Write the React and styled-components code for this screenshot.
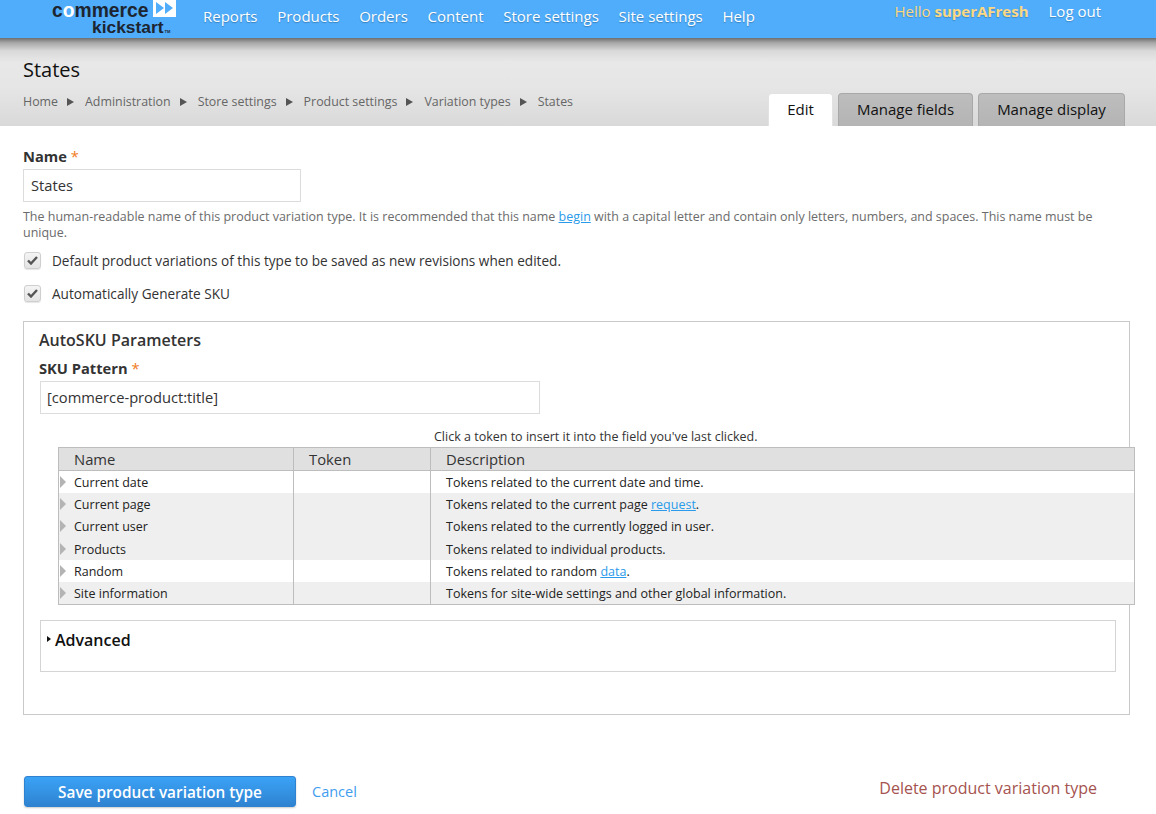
import React from 'react';
import styled, { createGlobalStyle } from 'styled-components';

const GlobalStyle = createGlobalStyle`
  html, body {
    margin: 0;
    padding: 0;
    background: #fff;
    overflow: hidden;
  }
  body {
    font-family: "Open Sans", "Noto Sans", sans-serif;
    color: #333;
  }
  * { box-sizing: border-box; }
`;

const Page = styled.div`
  width: 1156px;
  height: 814px;
  overflow: hidden;
`;

const TopBar = styled.header`
  height: 38px;
  background: #4fadfb;
  display: flex;
  padding-left: 52px;
`;

const Logo = styled.div`
  width: 124px;
  height: 38px;
  display: flex;
  flex-direction: column;
  font-family: "Liberation Sans", sans-serif;
  font-weight: 700;
  color: #1d2530;
  flex-shrink: 0;
`;

const LogoTop = styled.div`
  display: flex;
  height: 19px;
  padding-top: 2px;
  font-size: 19.3px;
  line-height: 17px;
`;

const LogoO = styled.span`
  color: #fff;
`;

const LogoMark = styled.svg`
  width: 23px;
  height: 17px;
  margin: -2px 0 0 5px;
  flex-shrink: 0;
`;

const LogoBottom = styled.div`
  font-size: 17.4px;
  line-height: 17px;
  padding-left: 40px;
  white-space: nowrap;
`;

const LogoTm = styled.sup`
  font-size: 4px;
  line-height: 0;
  vertical-align: baseline;
  margin-left: 1px;
`;

const Nav = styled.nav`
  display: flex;
  gap: 19.7px;
  padding: 6px 0 0 27px;
`;

const NavLink = styled.a`
  color: #fff;
  font-size: 15px;
  line-height: 20px;
  text-shadow: 0 1px 1px rgba(0, 0, 0, 0.25);
  white-space: nowrap;
`;

const UserBox = styled.div`
  margin-left: auto;
  display: flex;
  gap: 20px;
  padding: 1px 55px 0 0;
  font-size: 15px;
  line-height: 20px;
  text-shadow: 0 1px 1px rgba(0, 0, 0, 0.2);
`;

const Hello = styled.span`
  color: #fbd884;
  b { font-weight: 700; }
`;

const LogOut = styled.a`
  color: #fff;
`;

const TitleBand = styled.section`
  height: 88px;
  background: linear-gradient(#6f6f6f 0, #a9a9a9 5px, #d9d9d9 13px, #e8e8e8 24px, #e6e6e6 48px, #d9d9d9 88px);
  display: flex;
  justify-content: space-between;
  align-items: flex-end;
  padding: 0 31px 0 23px;
`;

const TitleBlock = styled.div`
  align-self: flex-start;
  padding-top: 18px;
`;

const Title = styled.h1`
  margin: 0;
  font-size: 20px;
  line-height: 27px;
  font-weight: 400;
  color: #111;
`;

const Crumbs = styled.div`
  display: flex;
  align-items: center;
  margin-top: 10px;
  font-size: 12.4px;
  line-height: 18px;
  color: #666;
`;

const CrumbArrow = styled.span`
  width: 0;
  height: 0;
  margin: 0 11px 0 9px;
  border-left: 7px solid #555;
  border-top: 4px solid transparent;
  border-bottom: 4px solid transparent;
`;

const Tabs = styled.div`
  display: flex;
  gap: 5px;
`;

const Tab = styled.a`
  height: 33px;
  width: ${(p) => p.$w}px;
  padding-bottom: 2px;
  display: flex;
  align-items: center;
  justify-content: center;
  font-size: 15px;
  color: #111;
  border-radius: 4px 4px 0 0;
  background: ${(p) => (p.$active ? '#fff' : 'linear-gradient(#bdbdbd, #b4b4b4)')};
  border: 1px solid ${(p) => (p.$active ? '#e2e2e2' : '#a8a8a8')};
  border-bottom: 0;
`;

const Main = styled.main`
  padding: 20px 26px 0 23px;
`;

const Label = styled.label`
  display: block;
  font-size: 14.7px;
  font-weight: 700;
  line-height: 20px;
  color: #333;
`;

const Req = styled.span`
  color: #f07c1e;
  font-weight: 400;
`;

const TextInput = styled.div`
  width: ${(p) => p.$w}px;
  height: ${(p) => p.$h}px;
  border: 1px solid #dcdcdc;
  padding: 0 0 2px 7px;
  display: flex;
  align-items: center;
  font-size: 14.7px;
  color: #333;
  background: #fff;
`;

const NameInput = styled(TextInput)`
  margin-top: 3px;
`;

const Help = styled.p`
  margin: 7px 0 0;
  font-size: 12.47px;
  line-height: 16px;
  color: #6b6b6b;
`;

const InlineLink = styled.a`
  color: #2a9bea;
  text-decoration: underline;
`;

const CheckRow = styled.div`
  display: flex;
  align-items: center;
  gap: 11px;
  height: 18px;
  margin-top: ${(p) => p.$top}px;
  font-size: 13.6px;
  color: #333;
  padding-left: 1px;
`;

const CheckBox = styled.span`
  width: 17px;
  height: 17px;
  border: 1px solid #cfcfcf;
  border-radius: 3px;
  background: linear-gradient(#f4f4f4, #e4e4e4);
  box-shadow: 0 1px 1px rgba(0, 0, 0, 0.1);
  display: flex;
  align-items: center;
  justify-content: center;
`;

const Fieldset = styled.section`
  margin-top: 19px;
  width: 1107px;
  height: 394px;
  border: 1px solid #c9c9c9;
  padding: 8px 0 0 15px;
`;

const Legend = styled.h2`
  margin: 0;
  font-size: 16px;
  line-height: 21px;
  font-weight: 600;
  color: #333;
`;

const SkuLabel = styled(Label)`
  margin-top: 7px;
`;

const SkuInput = styled(TextInput)`
  margin: 3px 0 0 1px;
  padding-left: 6px;
`;

const TokenHint = styled.div`
  margin-top: 14px;
  padding-left: 395px;
  font-size: 12.5px;
  line-height: 17px;
  color: #333;
`;

const TokenTable = styled.table`
  margin: 2px 0 0 19px;
  width: 1077px;
  border-collapse: collapse;
  border: 1px solid #bdbdbd;
  table-layout: fixed;
`;

const HeadCell = styled.th`
  height: 23px;
  padding: 0 0 0 15px;
  font-size: 14.8px;
  font-weight: 400;
  text-align: left;
  color: #333;
  background: #e0e0e0;
  border: 1px solid #bdbdbd;
`;

const Row = styled.tr`
  background: ${(p) => (p.$odd ? '#fff' : '#efefef')};
`;

const Cell = styled.td`
  height: 22.4px;
  padding: 2px 0 0 15px;
  font-size: 12.5px;
  line-height: 16px;
  color: #222;
  border-left: 1px solid #bdbdbd;
  white-space: nowrap;
`;

const NameCell = styled(Cell)`
  position: relative;
`;

const Expander = styled.span`
  position: absolute;
  left: 1px;
  top: 5px;
  width: 0;
  height: 0;
  border-left: 6px solid #b4b4b4;
  border-top: 6px solid transparent;
  border-bottom: 6px solid transparent;
`;

const Advanced = styled.section`
  margin: 15px 0 0 1px;
  width: 1076px;
  height: 52px;
  border: 1px solid #d4d4d4;
  padding: 8px 0 0 6px;
  display: flex;
  align-items: flex-start;
  gap: 4px;
  font-size: 16px;
  line-height: 22px;
  font-weight: 600;
  color: #111;
`;

const AdvancedArrow = styled.span`
  width: 0;
  height: 0;
  margin-top: 7px;
  border-left: 4px solid #111;
  border-top: 3.5px solid transparent;
  border-bottom: 3.5px solid transparent;
`;

const Actions = styled.div`
  margin-top: 61px;
  display: flex;
  align-items: flex-start;
  padding-left: 1px;
`;

const SaveButton = styled.button`
  width: 272px;
  height: 31px;
  padding: 0;
  border: 1px solid #2f82cf;
  border-radius: 3px;
  background: linear-gradient(#3ba2f6, #2f83d1);
  box-shadow: 0 1px 2px rgba(0, 0, 0, 0.2);
  color: #fff;
  font-family: inherit;
  font-size: 15.35px;
  font-weight: 600;
`;

const Cancel = styled.a`
  margin: 6px 0 0 16px;
  font-size: 14.5px;
  line-height: 20px;
  color: #3f9df0;
`;

const Delete = styled.a`
  margin: 2px 0 0 auto;
  padding-right: 33px;
  font-size: 16px;
  line-height: 20px;
  color: #a5534f;
`;

const navItems = ['Reports', 'Products', 'Orders', 'Content', 'Store settings', 'Site settings', 'Help'];
const crumbs = ['Home', 'Administration', 'Store settings', 'Product settings', 'Variation types', 'States'];

const tokens = [
  { name: 'Current date', desc: 'Tokens related to the current date and time.', odd: true },
  { name: 'Current page', desc: <>Tokens related to the current page <InlineLink>request</InlineLink>.</> },
  { name: 'Current user', desc: 'Tokens related to the currently logged in user.' },
  { name: 'Products', desc: 'Tokens related to individual products.' },
  { name: 'Random', desc: <>Tokens related to random <InlineLink>data</InlineLink>.</>, odd: true },
  { name: 'Site information', desc: 'Tokens for site-wide settings and other global information.' },
];

function Check() {
  return (
    <svg width="11" height="10" viewBox="0 0 11 10">
      <path d="M1 5.5 L4 8.5 L10 2" fill="none" stroke="#555" strokeWidth="2.4" />
    </svg>
  );
}

export default function App() {
  return (
    <Page>
      <GlobalStyle />
      <TopBar>
        <Logo>
          <LogoTop>
            <span>c<LogoO>o</LogoO>mmerce</span>
            <LogoMark viewBox="0 0 23 17">
              <rect width="23" height="17" fill="#fff" />
              <path d="M3 2 L11 8 L3 14 Z M12 2 L20 8 L12 14 Z" fill="#4fadfb" />
            </LogoMark>
          </LogoTop>
          <LogoBottom>kickstart<LogoTm>TM</LogoTm></LogoBottom>
        </Logo>
        <Nav>
          {navItems.map((item) => <NavLink key={item}>{item}</NavLink>)}
        </Nav>
        <UserBox>
          <Hello>Hello <b>superAFresh</b></Hello>
          <LogOut>Log out</LogOut>
        </UserBox>
      </TopBar>

      <TitleBand>
        <TitleBlock>
          <Title>States</Title>
          <Crumbs>
            {crumbs.map((c, i) => (
              <React.Fragment key={c}>
                <span>{c}</span>
                {i < crumbs.length - 1 && <CrumbArrow />}
              </React.Fragment>
            ))}
          </Crumbs>
        </TitleBlock>
        <Tabs>
          <Tab $active $w={65}>Edit</Tab>
          <Tab $w={135}>Manage fields</Tab>
          <Tab $w={147}>Manage display</Tab>
        </Tabs>
      </TitleBand>

      <Main>
        <Label>Name <Req>*</Req></Label>
        <NameInput $w={278} $h={33}>States</NameInput>
        <Help>
          The human-readable name of this product variation type. It is recommended that this name <InlineLink>begin</InlineLink> with a capital letter and contain only letters, numbers, and spaces. This name must be unique.
        </Help>
        <CheckRow $top={10}><CheckBox><Check /></CheckBox>Default product variations of this type to be saved as new revisions when edited.</CheckRow>
        <CheckRow $top={15}><CheckBox><Check /></CheckBox>Automatically Generate SKU</CheckRow>

        <Fieldset>
          <Legend>AutoSKU Parameters</Legend>
          <SkuLabel>SKU Pattern <Req>*</Req></SkuLabel>
          <SkuInput $w={500} $h={33}>[commerce-product:title]</SkuInput>
          <TokenHint>Click a token to insert it into the field you've last clicked.</TokenHint>
          <TokenTable>
            <colgroup>
              <col style={{ width: 235 }} />
              <col style={{ width: 137 }} />
              <col />
            </colgroup>
            <thead>
              <tr>
                <HeadCell>Name</HeadCell>
                <HeadCell>Token</HeadCell>
                <HeadCell>Description</HeadCell>
              </tr>
            </thead>
            <tbody>
              {tokens.map((t) => (
                <Row key={t.name} $odd={t.odd}>
                  <NameCell><Expander />{t.name}</NameCell>
                  <Cell />
                  <Cell>{t.desc}</Cell>
                </Row>
              ))}
            </tbody>
          </TokenTable>
          <Advanced><AdvancedArrow />Advanced</Advanced>
        </Fieldset>

        <Actions>
          <SaveButton>Save product variation type</SaveButton>
          <Cancel>Cancel</Cancel>
          <Delete>Delete product variation type</Delete>
        </Actions>
      </Main>
    </Page>
  );
}
